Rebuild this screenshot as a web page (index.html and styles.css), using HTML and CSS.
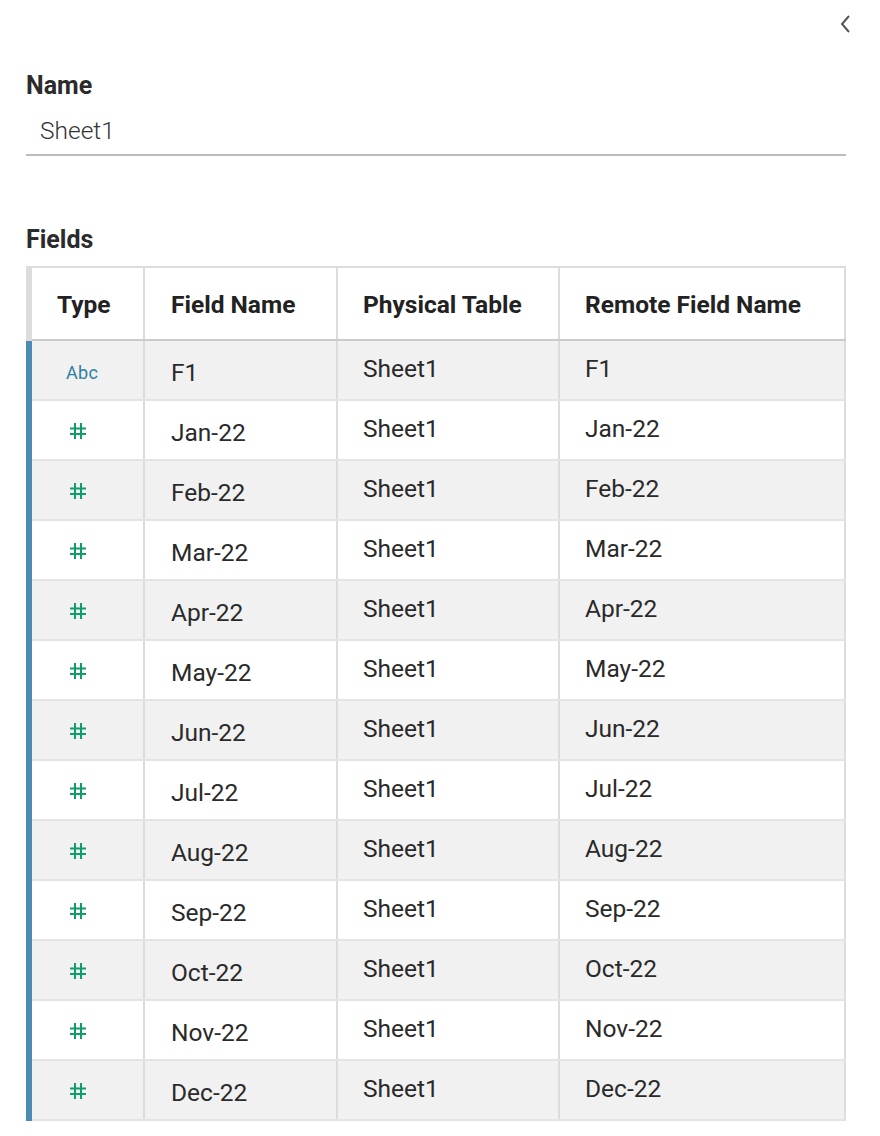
FILE: index.html
```html
<!DOCTYPE html>
<html>
<head>
<meta charset="utf-8">
<link rel="stylesheet" href="styles.css">
</head>
<body>
<div class="panel">
  <div class="topbar">
    <svg class="chev" width="14" height="20" viewBox="0 0 14 20"><polyline points="10,2 3,10 10,18" fill="none" stroke="#555" stroke-width="2"/></svg>
  </div>
  <div class="label name-label">Name</div>
  <div class="name-input">Sheet1</div>
  <div class="label fields-label">Fields</div>
  <table class="fields">
    <thead>
      <tr><th class="type">Type</th><th class="fname">Field Name</th><th class="ptable">Physical Table</th><th class="remote">Remote Field Name</th></tr>
    </thead>
    <tbody>
      <tr class="alt"><td class="type"><span class="abc">Abc</span></td><td class="fname">F1</td><td>Sheet1</td><td>F1</td></tr>
      <tr><td class="type"><svg class="num" width="16" height="16" viewBox="0 0 16 16"><path d="M5 0V16M11 0V16M0 5.5H16M0 11H16" stroke="#0e9e6a" stroke-width="2" fill="none"/></svg></td><td class="fname">Jan-22</td><td>Sheet1</td><td>Jan-22</td></tr>
      <tr class="alt"><td class="type"><svg class="num" width="16" height="16" viewBox="0 0 16 16"><path d="M5 0V16M11 0V16M0 5.5H16M0 11H16" stroke="#0e9e6a" stroke-width="2" fill="none"/></svg></td><td class="fname">Feb-22</td><td>Sheet1</td><td>Feb-22</td></tr>
      <tr><td class="type"><svg class="num" width="16" height="16" viewBox="0 0 16 16"><path d="M5 0V16M11 0V16M0 5.5H16M0 11H16" stroke="#0e9e6a" stroke-width="2" fill="none"/></svg></td><td class="fname">Mar-22</td><td>Sheet1</td><td>Mar-22</td></tr>
      <tr class="alt"><td class="type"><svg class="num" width="16" height="16" viewBox="0 0 16 16"><path d="M5 0V16M11 0V16M0 5.5H16M0 11H16" stroke="#0e9e6a" stroke-width="2" fill="none"/></svg></td><td class="fname">Apr-22</td><td>Sheet1</td><td>Apr-22</td></tr>
      <tr><td class="type"><svg class="num" width="16" height="16" viewBox="0 0 16 16"><path d="M5 0V16M11 0V16M0 5.5H16M0 11H16" stroke="#0e9e6a" stroke-width="2" fill="none"/></svg></td><td class="fname">May-22</td><td>Sheet1</td><td>May-22</td></tr>
      <tr class="alt"><td class="type"><svg class="num" width="16" height="16" viewBox="0 0 16 16"><path d="M5 0V16M11 0V16M0 5.5H16M0 11H16" stroke="#0e9e6a" stroke-width="2" fill="none"/></svg></td><td class="fname">Jun-22</td><td>Sheet1</td><td>Jun-22</td></tr>
      <tr><td class="type"><svg class="num" width="16" height="16" viewBox="0 0 16 16"><path d="M5 0V16M11 0V16M0 5.5H16M0 11H16" stroke="#0e9e6a" stroke-width="2" fill="none"/></svg></td><td class="fname">Jul-22</td><td>Sheet1</td><td>Jul-22</td></tr>
      <tr class="alt"><td class="type"><svg class="num" width="16" height="16" viewBox="0 0 16 16"><path d="M5 0V16M11 0V16M0 5.5H16M0 11H16" stroke="#0e9e6a" stroke-width="2" fill="none"/></svg></td><td class="fname">Aug-22</td><td>Sheet1</td><td>Aug-22</td></tr>
      <tr><td class="type"><svg class="num" width="16" height="16" viewBox="0 0 16 16"><path d="M5 0V16M11 0V16M0 5.5H16M0 11H16" stroke="#0e9e6a" stroke-width="2" fill="none"/></svg></td><td class="fname">Sep-22</td><td>Sheet1</td><td>Sep-22</td></tr>
      <tr class="alt"><td class="type"><svg class="num" width="16" height="16" viewBox="0 0 16 16"><path d="M5 0V16M11 0V16M0 5.5H16M0 11H16" stroke="#0e9e6a" stroke-width="2" fill="none"/></svg></td><td class="fname">Oct-22</td><td>Sheet1</td><td>Oct-22</td></tr>
      <tr><td class="type"><svg class="num" width="16" height="16" viewBox="0 0 16 16"><path d="M5 0V16M11 0V16M0 5.5H16M0 11H16" stroke="#0e9e6a" stroke-width="2" fill="none"/></svg></td><td class="fname">Nov-22</td><td>Sheet1</td><td>Nov-22</td></tr>
      <tr class="alt"><td class="type"><svg class="num" width="16" height="16" viewBox="0 0 16 16"><path d="M5 0V16M11 0V16M0 5.5H16M0 11H16" stroke="#0e9e6a" stroke-width="2" fill="none"/></svg></td><td class="fname">Dec-22</td><td>Sheet1</td><td>Dec-22</td></tr>
    </tbody>
  </table>
</div>
</body>
</html>
```
FILE: styles.css
```css
html, body {
  margin: 0;
  padding: 0;
  background: #fff;
}
body {
  font-family: Roboto, "Liberation Sans", Arial, sans-serif;
  color: #2b2b2b;
}
.panel {
  width: 820px;
  padding: 0 34px 0 26px;
}
.topbar {
  height: 48px;
  display: flex;
  justify-content: flex-end;
  align-items: flex-start;
}
.chev {
  margin-top: 14px;
  margin-right: -7px;
}
.label {
  font-size: 25px;
  font-weight: 700;
  color: #2b2b2b;
  line-height: 28px;
}
.name-label {
  margin-top: 24px;
}
.name-input {
  margin-top: 17px;
  padding: 0 0 9px 14px;
  font-size: 24.5px;
  font-weight: 300;
  line-height: 28px;
  color: #333;
  border-bottom: 2px solid #bcbcbc;
}
.fields-label {
  margin-top: 70px;
}
.fields {
  margin-top: 12px;
  width: 820px;
  border-collapse: collapse;
  table-layout: fixed;
  font-size: 24.5px;
}
.fields th, .fields td {
  border: 2px solid #dcdcdc;
  text-align: left;
  padding: 0 0 0 25px;
  white-space: nowrap;
}
.fields th {
  height: 69px;
  font-size: 24.5px;
  font-weight: 700;
  color: #222;
  background: #fff;
  border-bottom-color: #cbcbcb;
  padding-top: 2px;
}
.fields th.fname, .fields td.fname {
  padding-left: 26px;
}
.fields tbody tr {
  height: 60px;
}
.fields td {
  color: #2a2a2a;
  font-weight: 400;
  line-height: 28px;
  border-top-color: #e4e4e4;
  border-bottom-color: #e4e4e4;
}
.fields tr.alt td {
  background: #f1f1f1;
}
.fields th.type, .fields td.type {
  width: 86px;
  border-left: 6px solid #dcdcdc;
  padding-left: 25px;
}
.fields td.type {
  border-left-color: #4a8bb4;
  padding-left: 38px;
}
.fields .fname {
  width: 165px;
}
.fields td.fname {
  padding-top: 6px;
}
.fields .ptable {
  width: 195px;
}
.fields td:nth-child(3), .fields td:nth-child(4) {
  padding-bottom: 2px;
}
.abc {
  display: inline-block;
  margin-left: -4px;
  color: #2f7ea6;
  font-size: 18px;
  font-weight: 400;
  letter-spacing: 0.3px;
  position: relative;
  top: 2px;
}
.num {
  display: block;
  position: relative;
  top: 1px;
}
```
